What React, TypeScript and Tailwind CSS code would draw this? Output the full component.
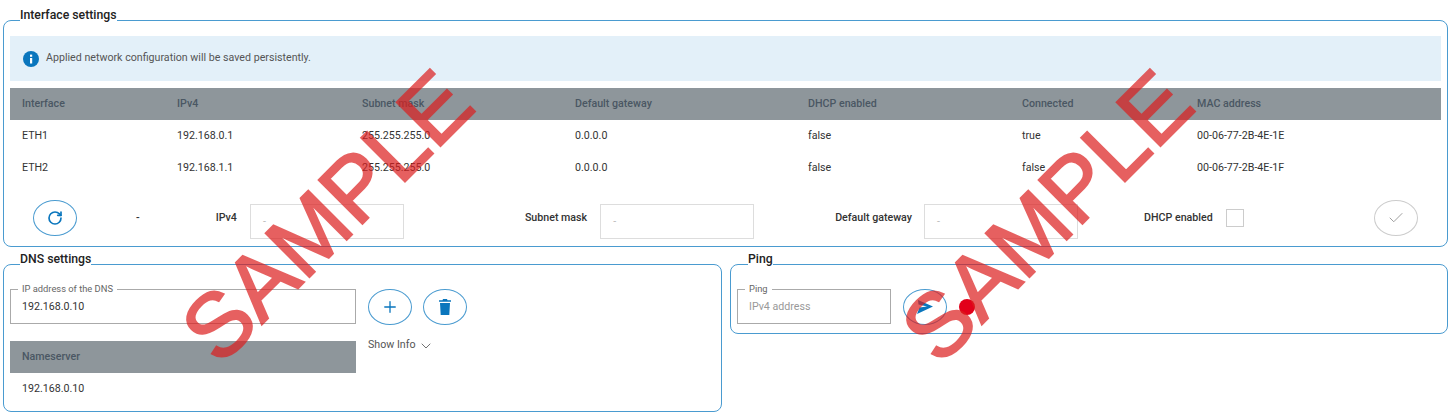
import React from 'react';
import { ChevronDown, Check, Plus, RotateCw } from 'lucide-react';

const interfaceCols = 'grid grid-cols-[155px_185px_213px_233px_214px_175px_1fr]';

const interfaceRows = [
  ['ETH1', '192.168.0.1', '255.255.255.0', '0.0.0.0', 'false', 'true', '00-06-77-2B-4E-1E'],
  ['ETH2', '192.168.1.1', '255.255.255.0', '0.0.0.0', 'false', 'false', '00-06-77-2B-4E-1F'],
];

const headers = ['Interface', 'IPv4', 'Subnet mask', 'Default gateway', 'DHCP enabled', 'Connected', 'MAC address'];

const Panel = ({ title, className, legendClass = 'ml-[10px]', children }: { title: string; className: string; legendClass?: string; children: React.ReactNode }) => (
  <fieldset className={`border border-[#4a9bd0] rounded-lg px-[6px] min-w-0 ${className}`}>
    <legend className={`h-6 pt-px text-[12.25px] leading-3 font-medium text-[#222] ${legendClass}`}>{title}</legend>
    {children}
  </fieldset>
);

const RoundButton = ({ children, muted }: { children: React.ReactNode; muted?: boolean }) => (
  <button className={`w-11 h-9 shrink-0 rounded-[50%] border flex items-center justify-center ${muted ? 'border-[#ccc] text-[#999]' : 'border-[#4a9bd0] text-[#0a76bd]'}`}>
    {children}
  </button>
);

const FormField = ({ label, ml, inputMl }: { label: string; ml: string; inputMl: string }) => (
  <>
    <span className={`font-medium text-[#333] whitespace-nowrap ${ml}`}>{label}</span>
    <div className={`w-[154px] h-[35px] border border-[#ddd] flex items-center px-3 text-[#bbb] mt-[7px] ${inputMl}`}>-</div>
  </>
);

const NotchedInput = ({ label, value, placeholder, className }: { label: string; value?: string; placeholder?: string; className: string }) => (
  <fieldset className={`border border-[#aaa] h-[41px] min-w-0 ${className}`}>
    <legend className="ml-[7px] px-1 text-[9.33px] leading-3 text-[#666]">{label}</legend>
    <div className={`px-[11px] h-[24px] flex items-center ${value ? 'text-[#333]' : 'text-[#999]'}`}>{value ?? placeholder}</div>
  </fieldset>
);

// opacity on the whole element so the stroke and the fill don't double up
const Watermark = ({ className }: { className: string }) => (
  <div className={`absolute pointer-events-none text-[90px] leading-none text-[#dc1e1e] opacity-70 [-webkit-text-stroke:2px_#dc1e1e] font-['Liberation_Sans',sans-serif] -rotate-45 ${className}`}>
    SAMPLE
  </div>
);

export default function App() {
  return (
    <div className="relative w-[1450px] h-[418px] overflow-hidden bg-white pt-2 pl-[3px] pr-[2px] text-[10.67px] text-[#333] font-['Roboto',sans-serif]">
      <Panel title="Interface settings" className="h-[239px]">
        {/* Info banner */}
        <div className="mt-1 h-[45px] bg-[#e3f0f9] flex items-center pl-[13px] text-[#555]">
          <svg width="16" height="16" viewBox="0 0 16 16" className="mr-[7px]">
            <circle cx="8" cy="8" r="8" fill="#0a76bd" />
            <rect x="7" y="7" width="2.2" height="5.5" fill="#fff" />
            <rect x="7" y="3.6" width="2.2" height="2.2" fill="#fff" />
          </svg>
          <span className="mb-[2px]">Applied network configuration will be saved persistently.</span>
        </div>

        {/* Interface table */}
        <div className={`${interfaceCols} mt-[7px] h-8 bg-[#8e969b] items-center font-medium text-[#4a5763]`}>
          {headers.map(h => (
            <div key={h} className="pl-3">{h}</div>
          ))}
        </div>
        {interfaceRows.map(row => (
          <div key={row[0]} className={`${interfaceCols} h-8 items-center`}>
            {row.map((cell, i) => (
              <div key={i} className="pl-3">{cell}</div>
            ))}
          </div>
        ))}

        {/* Edit row */}
        <div className="flex items-center mt-[16px] h-9">
          <div className="ml-[23px]">
            <RoundButton><RotateCw size={16} strokeWidth={2.5} /></RoundButton>
          </div>
          <span className="ml-[59px] font-medium">-</span>
          <FormField label="IPv4" ml="ml-[76px]" inputMl="ml-[13px]" />
          <FormField label="Subnet mask" ml="ml-[121px]" inputMl="ml-[13px]" />
          <FormField label="Default gateway" ml="ml-[81px]" inputMl="ml-3" />
          <span className="ml-[66px] font-medium whitespace-nowrap">DHCP enabled</span>
          <div className="ml-[13px] w-[18px] h-[18px] border border-[#ccc]" />
          <div className="ml-[130px]">
            <RoundButton muted><Check size={18} strokeWidth={1.25} /></RoundButton>
          </div>
        </div>
      </Panel>

      <div className="flex items-start gap-2 mt-[5px]">
        <Panel title="DNS settings" className="w-[719px] h-[160px]">
          <div className="flex mt-[7px]">
            <div className="w-[346px]">
              <NotchedInput label="IP address of the DNS" value="192.168.0.10" className="w-full" />
              <div className="mt-[17px] h-8 bg-[#8e969b] flex items-center pl-3 font-medium text-[#4a5763]">Nameserver</div>
              <div className="h-8 flex items-center pl-3">192.168.0.10</div>
            </div>
            <div className="ml-3 pt-[6px]">
              <div className="flex gap-[11px]">
                <RoundButton><Plus size={18} strokeWidth={1.75} /></RoundButton>
                <RoundButton>
                  <svg width="12" height="16" viewBox="0 0 12 16" fill="currentColor">
                    <path d="M4 0h4l.5 1.2H12v1.6H0V1.2h3.5zM1 4h10l-.7 12H1.7z" />
                  </svg>
                </RoundButton>
              </div>
              <div className="flex items-center mt-[10px] text-[#555]">
                Show Info
                <ChevronDown size={16} strokeWidth={1.25} className="ml-[2px] mt-[3px]" />
              </div>
            </div>
          </div>
        </Panel>

        <Panel title="Ping" className="w-[718px] h-[82px]" legendClass="ml-[11px]">
          <div className="flex items-start mt-[7px]">
            <NotchedInput label="Ping" placeholder="IPv4 address" className="w-[154px]" />
            <div className="ml-3 pt-[6px] flex items-center">
              <RoundButton>
                <svg width="16" height="14" viewBox="0 0 16 14" fill="currentColor">
                  <path d="M1 0L16 6.5 0 14 2.5 7.5 10 6.5 1.5 4.5z" />
                </svg>
              </RoundButton>
              <div className="ml-[12px] mb-px w-4 h-4 rounded-full bg-[#e2001a]" />
            </div>
          </div>
        </Panel>
      </div>

      <Watermark className="left-[144px] top-[171px]" />
      <Watermark className="left-[864px] top-[171px]" />
    </div>
  );
}
